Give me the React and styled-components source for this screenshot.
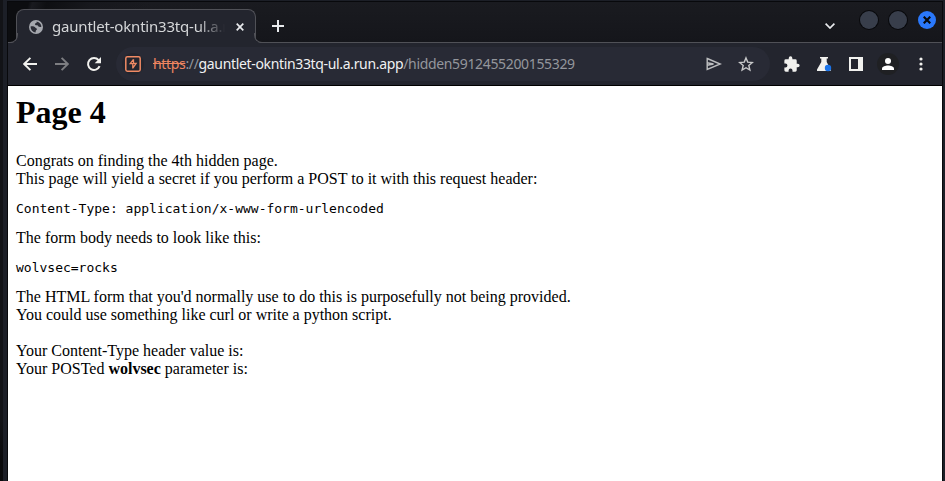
import React from "react";
import styled, { createGlobalStyle } from "styled-components";

const GlobalStyle = createGlobalStyle`
  * { box-sizing: border-box; }
  body { margin: 0; overflow: hidden; background: #101116; }
  button { appearance: none; border: 0; padding: 0; background: none; color: inherit; font: inherit; }
  svg { display: block; }
`;

const Desktop = styled.div`
  height: 481px;
  padding: 0 0 0 3px;
  background: linear-gradient(#121317 0 420px, #0a0a0c 460px);
`;

const Window = styled.div`
  height: 100%;
  display: flex;
  flex-direction: column;
  border: solid #1c1f27;
  border-width: 1px 2px 0 4px;
  box-shadow: inset 1px 1px #08090c, inset -1px 0 #08090c;
  padding: 1px 1px 0 1px;
  font-family: "Noto Sans", sans-serif;
  color: #e8eaed;
`;

const TitleBar = styled.header`
  flex: none;
  height: 41px;
  display: flex;
  align-items: flex-start;
  padding: 7px 6px 0 8px;
  border-bottom: 1px solid #505157;
  background:
    linear-gradient(105deg, #0c0d10 0 20px, #191a1f 24px, #0e0f12 38px, #17181d 80px, transparent 140px),
    linear-gradient(#1a1b20, #15161b);
`;

const Tab = styled.div`
  position: relative;
  width: 240px;
  height: 34px;
  display: flex;
  align-items: center;
  padding: 0 11px 0 12px;
  background: #23252e;
  border: 1px solid #505157;
  border-bottom: 0;
  border-radius: 8px 8px 0 0;

  &::before,
  &::after {
    content: "";
    position: absolute;
    bottom: 0;
    width: 9px;
    height: 9px;
    border: 1px solid #505157;
    border-top: 0;
  }
  &::before {
    left: -9px;
    border-left: 0;
    border-bottom-right-radius: 8px;
    box-shadow: 4px 4px 0 #23252e;
    clip-path: inset(0 -1px 0 0);
  }
  &::after {
    right: -9px;
    border-right: 0;
    border-bottom-left-radius: 8px;
    box-shadow: -4px 4px 0 #23252e;
    clip-path: inset(0 0 0 -1px);
  }
`;

const TabTitle = styled.span`
  width: 178px;
  margin: 0 6px 0 9px;
  white-space: nowrap;
  font-size: 15px;
  line-height: 22px;
  letter-spacing: -0.2px;
  position: relative;
  top: -1px;
  color: #d4d6d8;
  mask-image: linear-gradient(to right, #000 146px, transparent 173px);
`;

const NewTab = styled.button`
  margin: 11px 0 0 16px;
`;

const WindowControls = styled.div`
  margin: 2px 0 0 auto;
  display: flex;
  align-items: center;
  gap: 11px;
`;

const TabSearch = styled.button`
  margin: 12px 14px 0 0;
`;

const Control = styled.button`
  width: 18px;
  height: 18px;
  border-radius: 50%;
  display: grid;
  place-items: center;
  color: #08090c;
  background: ${(p) => (p.$active ? "#2a78fb" : "#383e4b")};
  box-shadow: 0 0 0 ${(p) => (p.$active ? "0" : "1px")} #08090c;
`;

const Toolbar = styled.nav`
  flex: none;
  height: 43px;
  display: flex;
  align-items: center;
  padding: 0 11px 0 12px;
  background: #23252e;
  border-bottom: 1px solid #000;
`;

const ToolButton = styled.button`
  flex: none;
  width: 20px;
  height: 20px;
  display: grid;
  place-items: center;
  margin-right: ${(p) => p.$gap ?? 12}px;
  color: ${(p) => (p.$dim ? "#7d7e82" : "#f1f1ee")};
`;

const AddressBar = styled.div`
  flex: 1;
  min-width: 0;
  height: 34px;
  display: flex;
  align-items: center;
  margin: 0 12px;
  padding: 0 14px 0 6px;
  border-radius: 17px;
  background: #282a35;
`;

const SiteBadge = styled.span`
  flex: none;
  width: 22px;
  height: 22px;
  display: grid;
  place-items: center;
  border-radius: 50%;
  background: #23252e;
`;

const Url = styled.span`
  margin-left: 9px;
  margin-right: auto;
  white-space: nowrap;
  font-size: 14px;
  line-height: 22px;
  letter-spacing: -0.34px;
  color: #94969c;
`;

const Scheme = styled.s`
  color: #ee8560;
`;

const Host = styled.span`
  color: #f0f1f2;
`;

const Avatar = styled.span`
  flex: none;
  width: 22px;
  height: 22px;
  display: grid;
  place-items: center;
  border-radius: 50%;
  margin-right: 12px;
  background: #1f2023;
  color: #fff;
`;

const Page = styled.main`
  flex: 1;
  padding: 8px;
  background: #fff;
  color: #000;
  font: 16px/18px "Liberation Serif", serif;
`;

const Heading = styled.h1`
  margin: 0 0 21.44px;
  font-size: 32px;
  line-height: 37px;
`;

const Code = styled.pre`
  margin: 13px 0;
  font: 13px/15px "DejaVu Sans Mono", monospace;
`;

const Globe = () => (
  <svg width="14" height="14" viewBox="0 0 14 14">
    <circle cx="7" cy="7" r="7" fill="#a5a8ae" />
    <path d="M7.6 1.6c.4 1.2-.2 1.700-1.600 2-.4 1.500.6 1.900 2.600 1.700.6 1.700 1.900 1.900 3.800 1.500 0-2.300-1.800-4.700-4.800-5.200ZM1.600 6.400c1.600-.3 4-.1 4.700 1.200.3.9 1.700.7 1.800 2-1 .4-1.500 1-1.500 2.800-2.800-.2-5-2.800-5-6Z" fill="#2b2d36" />
  </svg>
);

const Cross = ({ size, width }) => (
  <svg width={size} height={size} viewBox="0 0 8 8" stroke="currentColor" strokeWidth={width}>
    <path d="m.7.7 6.6 6.6M7.3.7.7 7.3" />
  </svg>
);

const Arrow = ({ flip }) => (
  <svg width="14" height="14" viewBox="0 0 14 14" fill="none" stroke="currentColor" strokeWidth="1.9">
    <path d={flip ? "M0 7h12.4M6.6.8 12.8 7l-6.2 6.2" : "M14 7H1.6M7.4.8 1.2 7l6.2 6.2"} />
  </svg>
);

const Reload = () => (
  <svg width="16" height="16" viewBox="0 0 16 16">
    <path d="M13.600 10.200A6 6 0 1 1 12.600 4.100" fill="none" stroke="currentColor" strokeWidth="2" />
    <path d="M15 1v6.3H8.7Z" fill="currentColor" />
  </svg>
);

const Bolt = () => (
  <svg width="16" height="16" viewBox="0 0 16 16" fill="none" stroke="#f08a64">
    <rect x=".8" y=".8" width="14.4" height="14.4" rx="1.6" strokeWidth="1.5" />
    <path d="M8.500 3.300 5.200 7.700h2.600v4.800M8.500 3.300v4.100h2.600L7.800 12" strokeWidth="1.3" />
  </svg>
);

const Send = () => (
  <svg width="16" height="14" viewBox="0 0 16 14" fill="none" stroke="#bcbdbf" strokeWidth="1.4">
    <path d="M1.2 1.5 14.3 7 1.2 12.5ZM1.2 5.8 7.5 7l-6.3 1.2" />
  </svg>
);

const Star = () => (
  <svg width="16" height="16" viewBox="0 0 16 16" fill="none" stroke="#c8c9ca" strokeWidth="1.4">
    <path d="m8 1.9 1.7 4.2 4.6.4-3.5 3 1.1 4.6L8 11.7l-3.9 2.4 1.1-4.6-3.5-3 4.600-.4Z" />
  </svg>
);

const Puzzle = () => (
  <svg width="16" height="16" viewBox="1.5 0.5 22 22" fill="currentColor">
    <path d="M20.5 11H19V7a2 2 0 0 0-2-2h-4V3.5a2.5 2.5 0 0 0-5 0V5H4a2 2 0 0 0-2 2v3.8h1.5a2.7 2.7 0 0 1 0 5.4H2V20a2 2 0 0 0 2 2h3.8v-1.5a2.7 2.7 0 0 1 5.4 0V22H17a2 2 0 0 0 2-2v-4h1.5a2.5 2.5 0 0 0 0-5Z" />
  </svg>
);

const Flask = () => (
  <svg width="16" height="16" viewBox="0 0 16 16">
    <path d="M4 1h8v1.5h-1.3V6l4 7.4V15H1v-1.6L5.3 6V2.5H4Z" fill="currentColor" />
    <circle cx="12" cy="12" r="3.2" fill="#1a73e8" />
  </svg>
);

const SidePanel = () => (
  <svg width="14" height="14" viewBox="0 0 14 14">
    <path fillRule="evenodd" d="M0 0h14v14H0ZM2 2v10h7V2Z" fill="currentColor" />
  </svg>
);

const Person = () => (
  <svg width="12" height="12" viewBox="0 0 12 12" fill="currentColor">
    <circle cx="6" cy="3" r="3" />
    <path d="M0 12v-1.5C0 8.500 3.500 7.500 6 7.500s6 1 6 3V12Z" />
  </svg>
);

const Dots = () => (
  <svg width="4" height="14" viewBox="0 0 4 14" fill="currentColor">
    <circle cx="2" cy="2" r="1.6" />
    <circle cx="2" cy="7" r="1.6" />
    <circle cx="2" cy="12" r="1.6" />
  </svg>
);

export default function App() {
  return (
    <Desktop>
      <GlobalStyle />
      <Window>
        <TitleBar>
          <Tab>
            <Globe />
            <TabTitle>gauntlet-okntin33tq-ul.a.r</TabTitle>
            <Cross size={8} width={1.7} />
          </Tab>
          <NewTab aria-label="New tab">
            <svg width="12" height="12" viewBox="0 0 12 12" stroke="currentColor" strokeWidth="2">
              <path d="M6 0v12M0 6h12" />
            </svg>
          </NewTab>
          <WindowControls>
            <TabSearch aria-label="Search tabs">
              <svg width="10" height="6" viewBox="0 0 10 6" fill="none" stroke="currentColor" strokeWidth="1.7">
                <path d="m.6.6 4.400 4.400L9.400.6" />
              </svg>
            </TabSearch>
            <Control aria-label="Minimize" />
            <Control aria-label="Maximize" />
            <Control aria-label="Close" $active>
              <Cross size={8} width={2.2} />
            </Control>
          </WindowControls>
        </TitleBar>
        <Toolbar>
          <ToolButton aria-label="Back"><Arrow /></ToolButton>
          <ToolButton aria-label="Forward" $dim><Arrow flip /></ToolButton>
          <ToolButton aria-label="Reload" $gap={0}><Reload /></ToolButton>
          <AddressBar>
            <SiteBadge><Bolt /></SiteBadge>
            <Url><Scheme>https</Scheme>://<Host>gauntlet-okntin33tq-ul.a.run.app</Host>/hidden5912455200155329</Url>
            <ToolButton aria-label="Share"><Send /></ToolButton>
            <ToolButton aria-label="Bookmark" $gap={0}><Star /></ToolButton>
          </AddressBar>
          <ToolButton aria-label="Extensions"><Puzzle /></ToolButton>
          <ToolButton aria-label="Labs"><Flask /></ToolButton>
          <ToolButton aria-label="Side panel" $gap={11}><SidePanel /></ToolButton>
          <Avatar><Person /></Avatar>
          <ToolButton aria-label="Menu" $gap={0}><Dots /></ToolButton>
        </Toolbar>
        <Page>
          <Heading>Page 4</Heading>
          Congrats on finding the 4th hidden page.<br />
          This page will yield a secret if you perform a POST to it with this request header:
          <Code>Content-Type: application/x-www-form-urlencoded</Code>
          The form body needs to look like this:
          <Code>wolvsec=rocks</Code>
          The HTML form that you'd normally use to do this is purposefully not being provided.<br />
          You could use something like curl or write a python script.<br />
          <br />
          Your Content-Type header value is:<br />
          Your POSTed <b>wolvsec</b> parameter is:
        </Page>
      </Window>
    </Desktop>
  );
}
